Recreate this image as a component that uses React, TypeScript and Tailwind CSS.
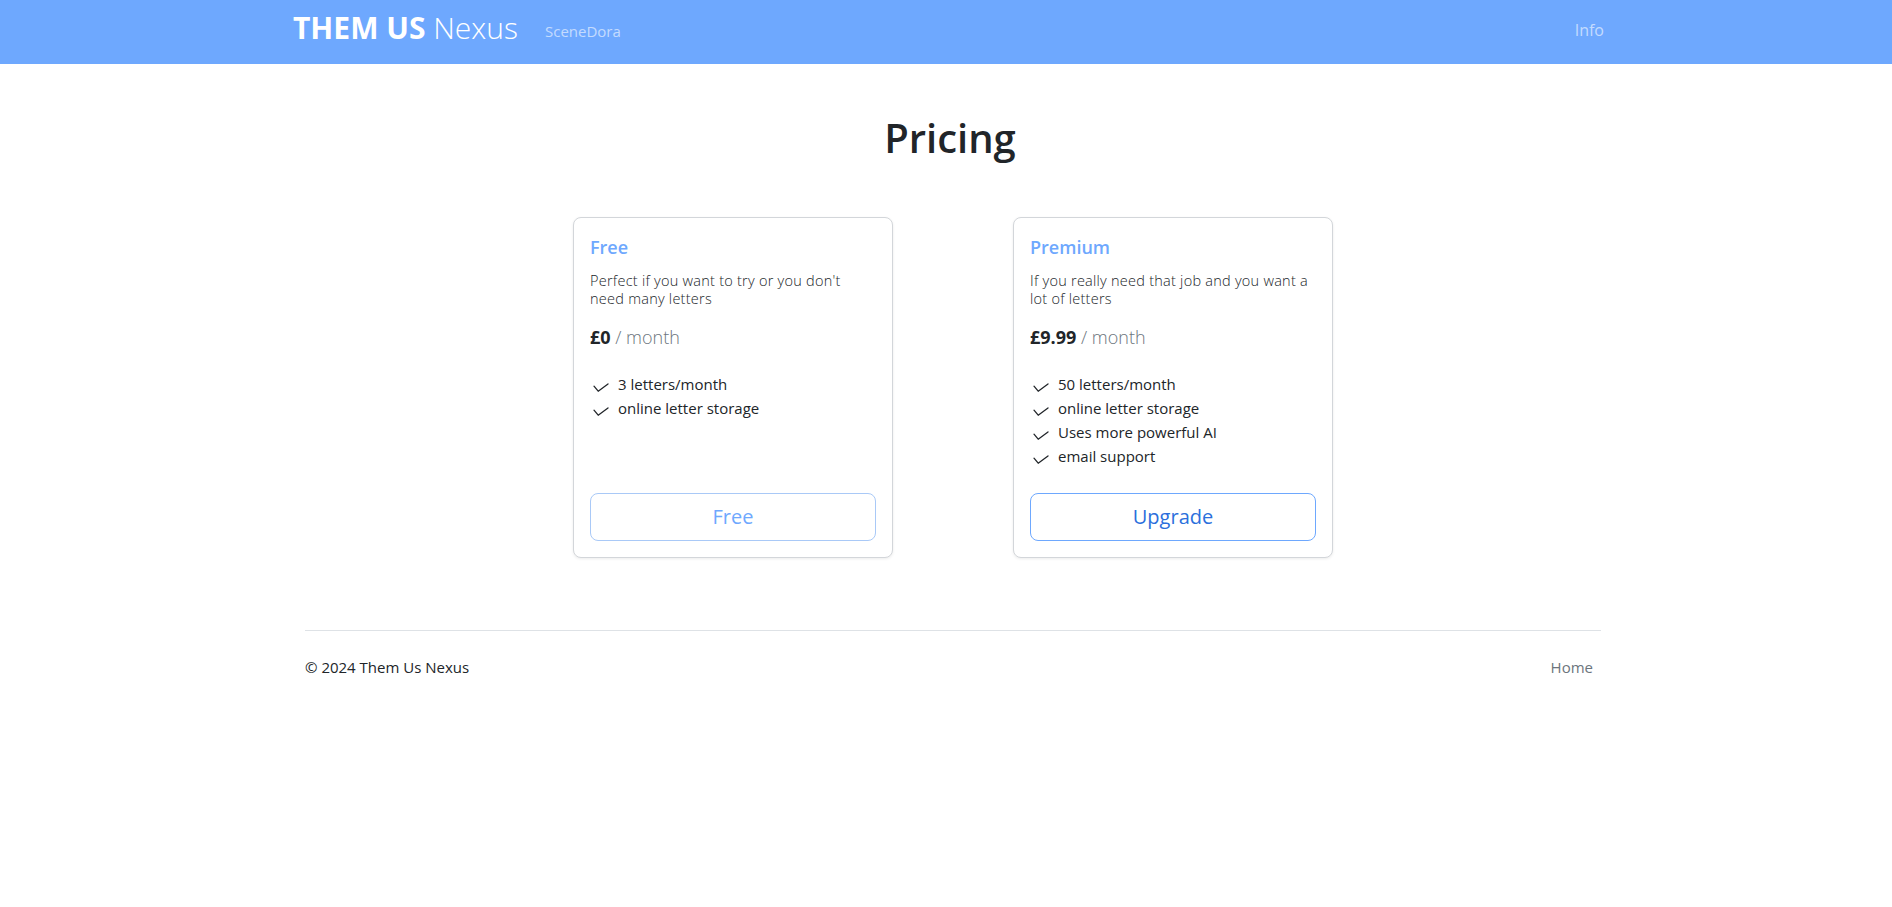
import React from 'react';

type Plan = {
  name: string;
  blurb: string;
  price: string;
  features: string[];
  cta: string;
  primary?: boolean;
};

const plans: Plan[] = [
  {
    name: 'Free',
    blurb: "Perfect if you want to try or you don't need many letters",
    price: '£0',
    features: ['3 letters/month', 'online letter storage'],
    cta: 'Free',
  },
  {
    name: 'Premium',
    blurb: 'If you really need that job and you want a lot of letters',
    price: '£9.99',
    features: ['50 letters/month', 'online letter storage', 'Uses more powerful AI', 'email support'],
    cta: 'Upgrade',
    primary: true,
  },
];

function CheckIcon() {
  return (
    <svg
      width="16"
      height="10"
      viewBox="0 0 16 10"
      fill="none"
      stroke="#212529"
      strokeWidth="1.3"
      strokeLinecap="round"
      strokeLinejoin="round"
      className="mt-[11px] ml-[3px] shrink-0"
    >
      <polyline points="1,3.2 5.2,8.2 15,1" />
    </svg>
  );
}

function PlanCard({ plan }: { plan: Plan }) {
  return (
    <div className="flex w-[320px] flex-col rounded-lg border border-[#d3d6da] bg-white px-4 pb-4 pt-[17px] shadow-[0_1px_3px_rgba(0,0,0,0.08)]">
      <h5 className="text-[18px] font-semibold leading-6 text-[#6ea8fe]">{plan.name}</h5>
      <p className="mt-[13px] text-[14.5px] font-light leading-[18px] tracking-[0.25px] text-[#212529]">
        {plan.blurb}
      </p>
      <div className="mt-[17px] text-[18px] leading-6">
        <span className="font-bold text-[#212529]">{plan.price}</span>
        <span className="font-light text-[#6c757d]"> / month</span>
      </div>
      <ul className="mb-[25px] mt-[23px] text-[15px] leading-6 text-[#212529]">
        {plan.features.map((f) => (
          <li key={f} className="flex items-start">
            <CheckIcon />
            <span className="ml-[9px]">{f}</span>
          </li>
        ))}
      </ul>
      <button
        className={
          plan.primary
            ? 'mt-auto h-[48px] w-full rounded-lg border border-[#6ea8fe] text-[20px] text-[#2b6fdc]'
            : 'mt-auto h-[48px] w-full rounded-lg border border-[#a9c9f7] text-[20px] text-[#6ea8fe]'
        }
      >
        {plan.cta}
      </button>
    </div>
  );
}

export default function App() {
  return (
    <div className="min-h-[907px] bg-white font-['Open_Sans',sans-serif] text-[#212529]">
      <nav className="h-[64px] bg-[#6ea8fe]">
        <div className="mx-auto flex w-[1310px] items-start justify-between">
          <div className="flex items-start">
            <a className="block w-[254px] pl-[2px] pt-[10px] text-[30px] leading-[36px] text-white">
              <span className="font-bold">THEM US</span> <span className="font-light">Nexus</span>
            </a>
            <a className="pt-[19px] text-[15px] leading-6 text-white/60">SceneDora</a>
          </div>
          <a className="-mr-[3px] pt-[18px] text-[16px] leading-6 text-white/60">Info</a>
        </div>
      </nav>

      <main className="mx-auto w-[1310px] pl-[14px]">
        <h1 className="mt-[50px] pr-[6px] text-center text-[40px] font-semibold leading-[48px] text-[#212529]">
          Pricing
        </h1>

        <div className="mt-[55px] flex justify-center gap-[120px]">
          {plans.map((p) => (
            <PlanCard key={p.name} plan={p} />
          ))}
        </div>

        <footer className="mt-[72px] border-t border-[#dee2e6] pt-[24px]">
          <div className="flex items-start justify-between text-[15px] leading-6">
            <span className="text-[#212529]">© 2024 Them Us Nexus</span>
            <a className="px-2 text-[#6c757d]">Home</a>
          </div>
        </footer>
      </main>
    </div>
  );
}
